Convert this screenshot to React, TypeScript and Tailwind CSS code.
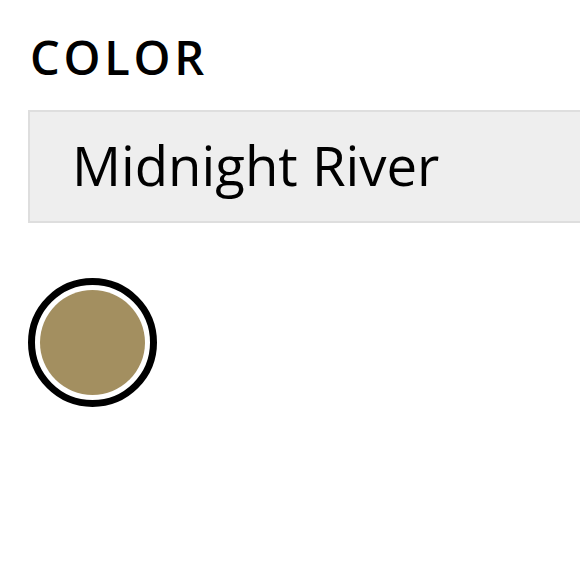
export default function App() {
  return (
    <div className="w-[580px] h-[580px] overflow-hidden bg-white pl-[28px] pt-[34px] font-['Open_Sans',sans-serif]">
      <div className="text-[47px] leading-none font-semibold tracking-[0.08em] text-black pl-[2px]">
        COLOR
      </div>

      {/* selected colour name */}
      <div className="mt-[29px] w-[600px] h-[113px] flex items-center bg-[#eeeeee] border-2 border-[#dedede] pl-[42px] pb-[3px]">
        <span className="text-[54.5px] leading-none text-black">Midnight River</span>
      </div>

      {/* swatch */}
      <div className="mt-[55px] w-[129px] h-[129px] rounded-full border-[7px] border-black p-[5px] bg-white">
        <div className="w-full h-full rounded-full bg-[#a38f60]" />
      </div>
    </div>
  )
}
